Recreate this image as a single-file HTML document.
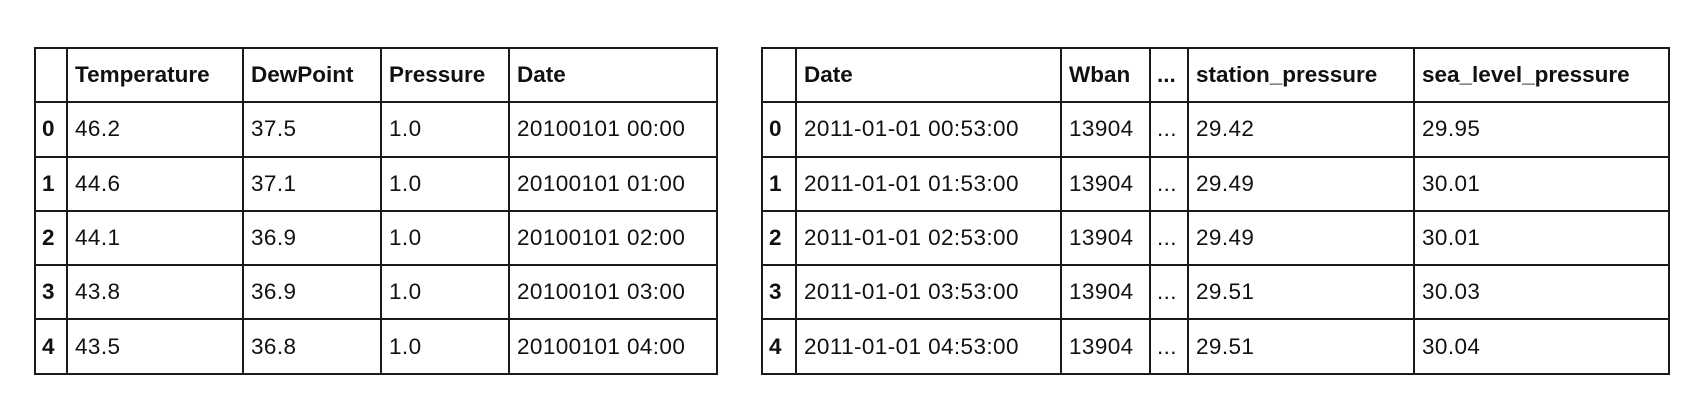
<!DOCTYPE html>
<html><head><meta charset="utf-8"><style>
html,body{margin:0;padding:0;background:#fff;width:1700px;height:404px;overflow:hidden}
table{position:absolute;border-collapse:collapse;table-layout:fixed;font-family:"Liberation Sans",Arial,sans-serif;font-size:22.5px;color:#111;letter-spacing:0.4px}
td,th{border:2px solid #1a1a1a;height:54.3px;padding:0 0 0 7px;text-align:left;white-space:nowrap;overflow:hidden;box-sizing:border-box}
th{font-weight:bold;font-size:22.5px;letter-spacing:0px}
td.i{font-weight:bold;padding-left:6px}
</style></head><body>
<table style="left:34px;top:47px;width:682px">
<colgroup><col style="width:32px"><col style="width:176px"><col style="width:138px"><col style="width:128px"><col style="width:208px"></colgroup>
<tr><th></th><th>Temperature</th><th>DewPoint</th><th>Pressure</th><th>Date</th></tr>
<tr><td class="i">0</td><td>46.2</td><td>37.5</td><td>1.0</td><td>20100101 00:00</td></tr>
<tr><td class="i">1</td><td>44.6</td><td>37.1</td><td>1.0</td><td>20100101 01:00</td></tr>
<tr><td class="i">2</td><td>44.1</td><td>36.9</td><td>1.0</td><td>20100101 02:00</td></tr>
<tr><td class="i">3</td><td>43.8</td><td>36.9</td><td>1.0</td><td>20100101 03:00</td></tr>
<tr><td class="i">4</td><td>43.5</td><td>36.8</td><td>1.0</td><td>20100101 04:00</td></tr>
</table>
<table style="left:761px;top:47px;width:907px">
<colgroup><col style="width:34px"><col style="width:265px"><col style="width:89px"><col style="width:38px"><col style="width:226px"><col style="width:255px"></colgroup>
<tr><th></th><th>Date</th><th>Wban</th><th style="padding-left:6px">...</th><th>station_pressure</th><th>sea_level_pressure</th></tr>
<tr><td class="i">0</td><td>2011-01-01 00:53:00</td><td>13904</td><td style="padding-left:6px">...</td><td>29.42</td><td>29.95</td></tr>
<tr><td class="i">1</td><td>2011-01-01 01:53:00</td><td>13904</td><td style="padding-left:6px">...</td><td>29.49</td><td>30.01</td></tr>
<tr><td class="i">2</td><td>2011-01-01 02:53:00</td><td>13904</td><td style="padding-left:6px">...</td><td>29.49</td><td>30.01</td></tr>
<tr><td class="i">3</td><td>2011-01-01 03:53:00</td><td>13904</td><td style="padding-left:6px">...</td><td>29.51</td><td>30.03</td></tr>
<tr><td class="i">4</td><td>2011-01-01 04:53:00</td><td>13904</td><td style="padding-left:6px">...</td><td>29.51</td><td>30.04</td></tr>
</table>
</body></html>
